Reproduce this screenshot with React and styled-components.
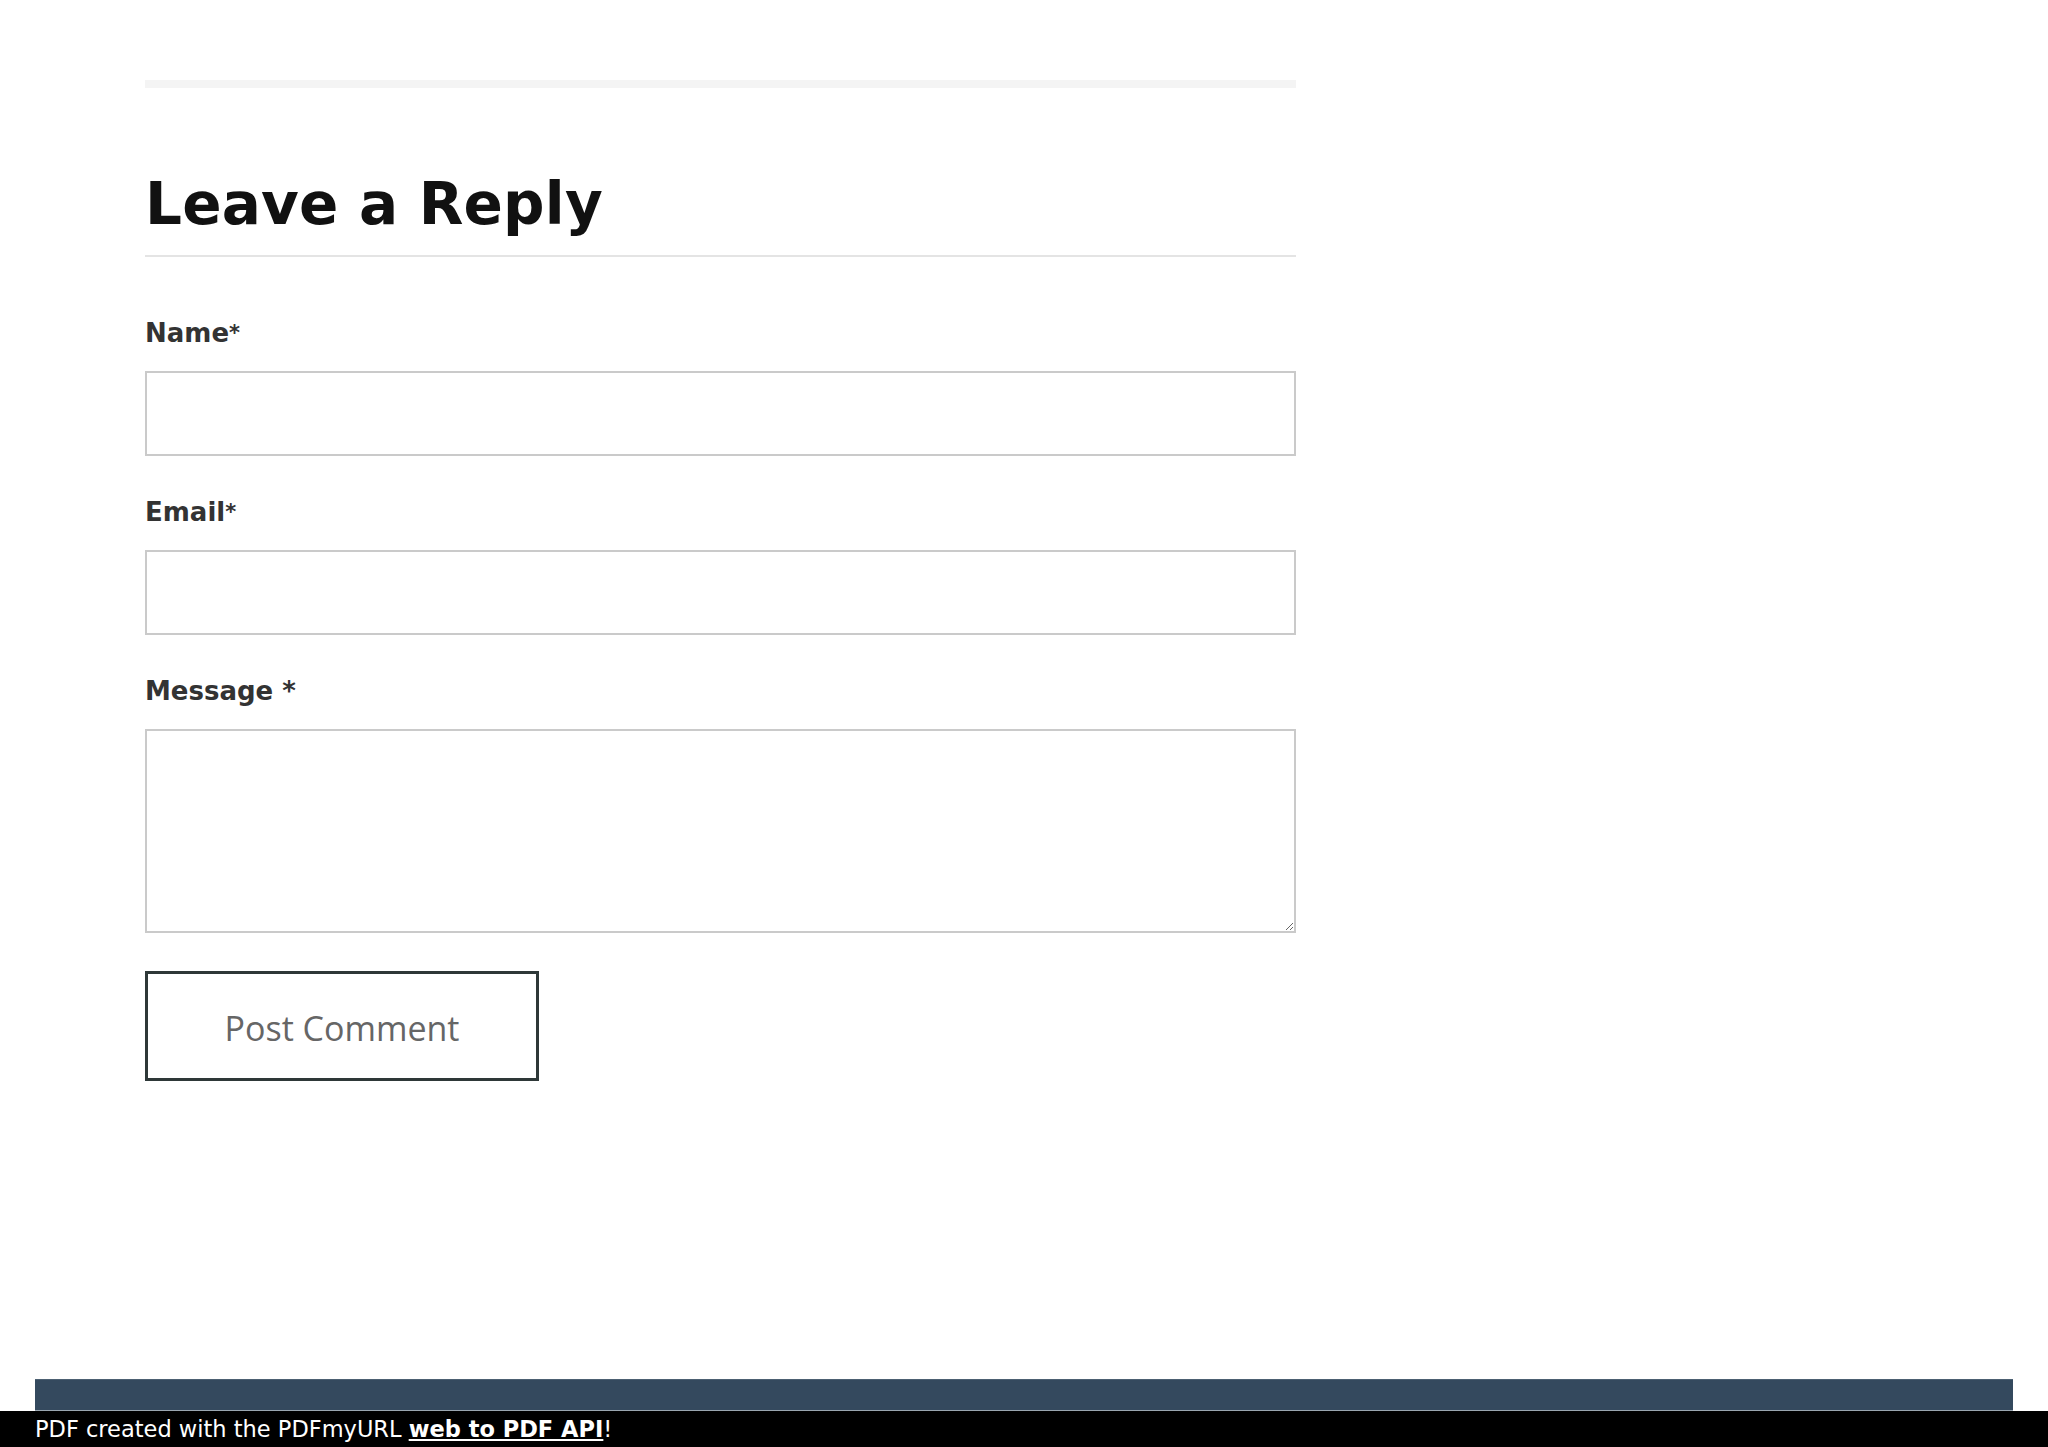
import React from "react";
import styled, { createGlobalStyle } from "styled-components";

const GlobalStyle = createGlobalStyle`
  html, body {
    margin: 0;
    padding: 0;
    background: #ffffff;
  }
  * {
    box-sizing: border-box;
  }
`;

const Page = styled.div`
  width: 2048px;
  height: 1447px;
  display: flex;
  flex-direction: column;
  background: #ffffff;
  overflow: hidden;
`;

const Main = styled.main`
  flex: 1;
  padding: 80px 0 0 145px;
`;

const Column = styled.div`
  width: 1151px;
`;

const Divider = styled.div`
  height: 8px;
  background: #f4f4f4;
`;

const Heading = styled.h3`
  margin: 81px 0 0;
  padding-bottom: 16px;
  border-bottom: 2px solid #e4e4e4;
  font-family: "DejaVu Sans", sans-serif;
  font-weight: 700;
  font-size: 58px;
  line-height: 70px;
  letter-spacing: 0.2px;
  color: #111111;
`;

const Form = styled.form`
  margin-top: 57px;
  display: flex;
  flex-direction: column;
`;

const Field = styled.div`
  display: flex;
  flex-direction: column;
  margin-bottom: ${(p) => (p.$last ? "38px" : "37px")};
`;

const Label = styled.label`
  font-family: "DejaVu Sans", sans-serif;
  font-weight: 700;
  font-size: 26px;
  line-height: 39px;
  height: 39px;
  color: #333333;
  margin-bottom: 18px;
`;

const Required = styled.span`
  font-size: ${(p) => (p.$small ? "21px" : "26px")};
  line-height: 0;
  vertical-align: ${(p) => (p.$small ? "2px" : "baseline")};
`;

const Input = styled.input`
  display: block;
  width: 100%;
  height: 85px;
  border: 2px solid #cacaca;
  background: #ffffff;
  outline: none;
  padding: 0 16px;
  font-family: "DejaVu Sans", sans-serif;
  font-size: 24px;
`;

const TextArea = styled.textarea`
  display: block;
  width: 100%;
  height: 204px;
  border: 2px solid #cacaca;
  background: #ffffff;
  outline: none;
  padding: 16px;
  font-family: "DejaVu Sans", sans-serif;
  font-size: 24px;
`;

const SubmitButton = styled.button`
  width: 394px;
  height: 110px;
  display: flex;
  align-items: center;
  justify-content: center;
  border: 3px solid #2e3838;
  background: #ffffff;
  font-family: "Open Sans", sans-serif;
  font-size: 34px;
  color: #666666;
  cursor: pointer;
  padding: 4px 0 0;
`;

const FooterBar = styled.footer`
  margin: 0 35px;
  height: 32px;
  background: #34495e;
  border-top: 1px solid #4c6072;
  border-bottom: 1px solid #9aa6b0;
`;

const PdfBar = styled.div`
  height: 36px;
  background: #000000;
  color: #ffffff;
  padding-left: 35px;
  font-family: "DejaVu Sans", sans-serif;
  font-size: 22.5px;
  line-height: 36px;
  white-space: nowrap;
`;

const PdfLink = styled.a`
  color: #ffffff;
  font-weight: 700;
  text-decoration: underline;
`;

export default function App() {
  return (
    <Page>
      <GlobalStyle />
      <Main>
        <Column>
          <Divider />
          <Heading>Leave a Reply</Heading>
          <Form onSubmit={(e) => e.preventDefault()}>
            <Field>
              <Label htmlFor="name">
                Name<Required $small>*</Required>
              </Label>
              <Input id="name" type="text" />
            </Field>
            <Field>
              <Label htmlFor="email">
                Email<Required $small>*</Required>
              </Label>
              <Input id="email" type="email" />
            </Field>
            <Field $last>
              <Label htmlFor="message">
                Message <Required>*</Required>
              </Label>
              <TextArea id="message" />
            </Field>
            <SubmitButton type="submit">Post Comment</SubmitButton>
          </Form>
        </Column>
      </Main>
      <FooterBar />
      <PdfBar>
        PDF created with the PDFmyURL <PdfLink href="#">web to PDF API</PdfLink>!
      </PdfBar>
    </Page>
  );
}
